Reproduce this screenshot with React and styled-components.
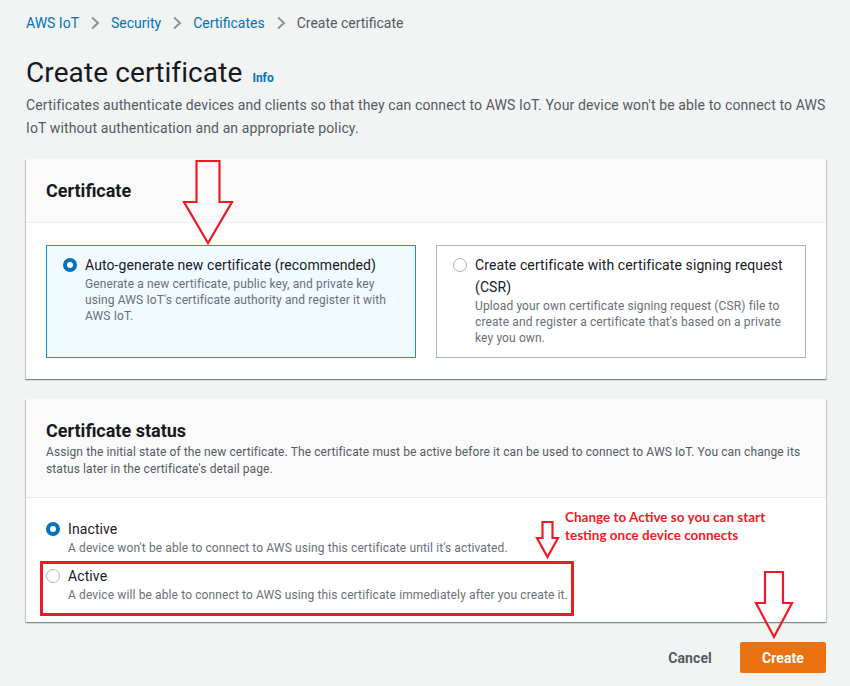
import React from 'react'
import styled, { createGlobalStyle } from 'styled-components'

const GlobalStyle = createGlobalStyle`
  html, body { margin: 0; padding: 0; background: #f2f3f3; }
  body { font-family: Roboto, "Noto Sans", sans-serif; color: #16191f; }
  * { box-sizing: border-box; }
`

const Page = styled.div`
  position: relative;
  width: 850px;
  min-height: 686px;
  padding: 12px 24px 0 26px;
`

const Crumbs = styled.nav`
  display: flex;
  align-items: center;
  height: 22px;
  font-size: 14px;
  line-height: 22px;
`

const Crumb = styled.span`
  color: ${p => (p.$current ? '#545b64' : '#0073bb')};
`

const Chevron = styled.svg`
  width: 12px;
  height: 14px;
  margin: 0 10px;
  color: #879596;
`

const TitleRow = styled.div`
  display: flex;
  align-items: baseline;
  margin-top: 21px;
`

const Title = styled.h1`
  margin: 0;
  font-size: 28px;
  line-height: 36px;
  font-weight: 400;
  color: #16191f;
  letter-spacing: 0.1px;
`

const Info = styled.span`
  margin-left: 10px;
  font-size: 12px;
  font-weight: 700;
  color: #0073bb;
`

const Lead = styled.p`
  margin: 3px 0 0;
  font-size: 14px;
  line-height: 23px;
  color: #545b64;
  letter-spacing: 0.12px;
`

const Card = styled.section`
  margin-top: ${p => p.$top || 20}px;
  background: #fff;
  box-shadow: 0 1px 1px 0 rgba(0, 28, 36, 0.3), 1px 1px 1px 0 rgba(0, 28, 36, 0.15),
    -1px 1px 1px 0 rgba(0, 28, 36, 0.15);
`

const CardHeader = styled.header`
  background: #fafafa;
  border-bottom: 1px solid #eaeded;
  padding: 20px 20px 19px;
`

const CardTitle = styled.h2`
  margin: 0;
  font-size: 18px;
  line-height: 24px;
  font-weight: 700;
  color: #16191f;
`

const CardDesc = styled.p`
  margin: 1px 0 0;
  font-size: 12px;
  line-height: 17px;
  color: #545b64;
  letter-spacing: 0.1px;
`

const CardBody = styled.div`
  padding: ${p => p.$top || 20}px 20px ${p => p.$bottom || 20}px;
`

const TileGrid = styled.div`
  display: grid;
  grid-template-columns: 1fr 1fr;
  gap: 20px;
`

const Tile = styled.label`
  display: flex;
  gap: 8px;
  padding: 8px 16px 11px;
  border: 1px solid ${p => (p.$selected ? '#00a1c9' : '#aab7b8')};
  background: ${p => (p.$selected ? '#f1faff' : '#fff')};
`

const Radio = styled.span`
  flex: none;
  width: 14px;
  height: 14px;
  margin-top: 4px;
  border-radius: 50%;
  background: #fff;
  border: ${p => (p.$checked ? '4px solid #0073bb' : '1.5px solid #aab7b8')};
`

const OptionText = styled.div`
  display: flex;
  flex-direction: column;
`

const OptionLabel = styled.span`
  font-size: 14px;
  line-height: 22px;
  color: #16191f;
  letter-spacing: 0.1px;
`

const OptionHint = styled.span`
  font-size: 12px;
  line-height: 16px;
  color: #687078;
  letter-spacing: 0.12px;
`

const StatusList = styled.div`
  display: flex;
  flex-direction: column;
  gap: 9px;
`

const StatusOption = styled.label`
  display: flex;
  gap: 8px;
`

const Actions = styled.div`
  display: flex;
  justify-content: flex-end;
  align-items: center;
  gap: 8px;
  margin-top: 20px;
`

const Button = styled.button`
  height: 31px;
  padding: 0 ${p => (p.$primary ? 22 : 20)}px;
  border: none;
  border-radius: 2px;
  font-family: inherit;
  font-size: 14px;
  font-weight: 700;
  letter-spacing: 0.1px;
  background: ${p => (p.$primary ? '#ec7211' : 'transparent')};
  color: ${p => (p.$primary ? '#fff' : '#545b64')};
`

/* annotation overlay drawn on top of the screenshot */
const Mark = styled.svg`
  position: absolute;
  overflow: visible;
  pointer-events: none;
`

const Frame = styled.div`
  position: absolute;
  left: 40px;
  top: 561px;
  width: 534px;
  height: 55px;
  border: 3px solid #ed1c24;
  pointer-events: none;
`

const Note = styled.div`
  position: absolute;
  left: 565px;
  top: 508px;
  font-family: Lato, "Open Sans", sans-serif;
  font-size: 13.5px;
  line-height: 18px;
  font-weight: 700;
  color: #ed1c24;
`

function ChevronIcon() {
  return (
    <Chevron viewBox="0 0 12 14">
      <path d="M3 1.5 L9 7 L3 12.5" fill="none" stroke="currentColor" strokeWidth="2" />
    </Chevron>
  )
}

function Arrow({ x, y, w, h, shaft, head }) {
  // shaft: width of the shaft, head: y where the head starts
  const l = (w - shaft) / 2
  const r = l + shaft
  const pts = `${l},0 ${r},0 ${r},${head} ${w},${head} ${w / 2},${h} 0,${head} ${l},${head}`
  return (
    <Mark style={{ left: x, top: y }} width={w} height={h} viewBox={`0 0 ${w} ${h}`}>
      <polygon points={pts} fill="none" stroke="#ed1c24" strokeWidth="2.2" strokeLinejoin="miter" />
    </Mark>
  )
}

export default function App() {
  return (
    <>
      <GlobalStyle />
      <Page>
        <Crumbs>
          <Crumb>AWS IoT</Crumb>
          <ChevronIcon />
          <Crumb>Security</Crumb>
          <ChevronIcon />
          <Crumb>Certificates</Crumb>
          <ChevronIcon />
          <Crumb $current>Create certificate</Crumb>
        </Crumbs>

        <TitleRow>
          <Title>Create certificate</Title>
          <Info>Info</Info>
        </TitleRow>
        <Lead>
          Certificates authenticate devices and clients so that they can connect to AWS IoT. Your device won't be able
          to connect to AWS IoT without authentication and an appropriate policy.
        </Lead>

        <Card $top={19}>
          <CardHeader>
            <CardTitle>Certificate</CardTitle>
          </CardHeader>
          <CardBody $top={22} $bottom={21}>
            <TileGrid>
              <Tile $selected>
                <Radio $checked />
                <OptionText>
                  <OptionLabel>Auto-generate new certificate (recommended)</OptionLabel>
                  <OptionHint>
                    Generate a new certificate, public key, and private key using AWS IoT's certificate authority and
                    register it with AWS IoT.
                  </OptionHint>
                </OptionText>
              </Tile>
              <Tile>
                <Radio />
                <OptionText>
                  <OptionLabel>Create certificate with certificate signing request (CSR)</OptionLabel>
                  <OptionHint>
                    Upload your own certificate signing request (CSR) file to create and register a certificate that's
                    based on a private key you own.
                  </OptionHint>
                </OptionText>
              </Tile>
            </TileGrid>
          </CardBody>
        </Card>

        <Card>
          <CardHeader>
            <CardTitle>Certificate status</CardTitle>
            <CardDesc>
              Assign the initial state of the new certificate. The certificate must be active before it can be used to
              connect to AWS IoT. You can change its status later in the certificate's detail page.
            </CardDesc>
          </CardHeader>
          <CardBody $top={20} $bottom={19}>
            <StatusList>
              <StatusOption>
                <Radio $checked />
                <OptionText>
                  <OptionLabel>Inactive</OptionLabel>
                  <OptionHint>A device won't be able to connect to AWS using this certificate until it's activated.</OptionHint>
                </OptionText>
              </StatusOption>
              <StatusOption>
                <Radio />
                <OptionText>
                  <OptionLabel>Active</OptionLabel>
                  <OptionHint>
                    A device will be able to connect to AWS using this certificate immediately after you create it.
                  </OptionHint>
                </OptionText>
              </StatusOption>
            </StatusList>
          </CardBody>
        </Card>

        <Actions>
          <Button>Cancel</Button>
          <Button $primary>Create</Button>
        </Actions>

        <Arrow x={184} y={161} w={48} h={82} shaft={23} head={41} />
        <Arrow x={537} y={522} w={21} h={35} shaft={10} head={16} />
        <Arrow x={756} y={572} w={36} h={65} shaft={18} head={31} />
        <Frame />
        <Note>
          Change to Active so you can start
          <br />
          testing once device connects
        </Note>
      </Page>
    </>
  )
}
